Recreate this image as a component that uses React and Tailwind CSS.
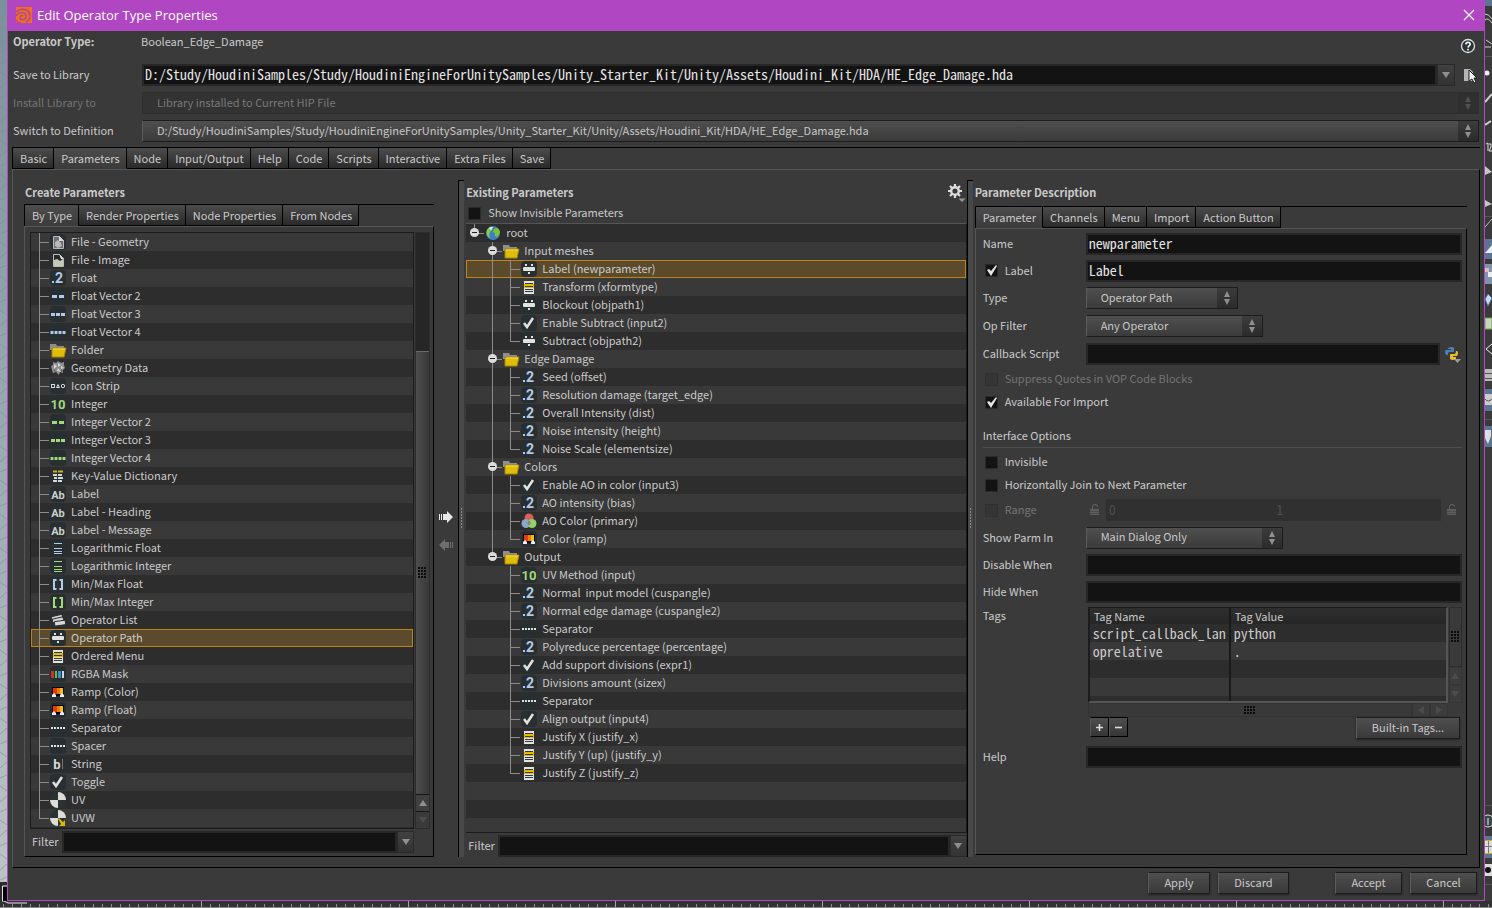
import React from "react";

const MONO = "font-['Noto_Sans_Mono_CJK_SC','Liberation_Mono',monospace]";

/* ---------- icons ---------- */

const BLUE = "#b4cbe8";
const GREEN = "#a3d977";

function Plate() {
  return <rect x="1" y="1" width="16" height="16" rx="4" fill="#282f32" stroke="none" />;
}

function Glyph({ children, fill, size = 13, x = 9 }) {
  return (
    <text x={x} y="14" textAnchor="middle" fill={fill} fontSize={size} className="font-['Roboto','Liberation_Sans',sans-serif] font-bold">
      {children}
    </text>
  );
}

function Bars({ xs, w, fill, y = 8, h = 3 }) {
  return xs.map((x) => <rect key={x} x={x} y={y} width={w} height={h} fill={fill} />);
}

const GEO = (
  <g>
    <path d="M2 7l2-1V3l3 1 2-2 3 2 3-1v3l1 3-2 2v3l-3-1-1 3-3-3-3 1-1-3z" fill="#8d8d8d" />
    <path d="M5 5l3 2-3 3zM9 4l3 2-3 2zM9 9l3 4-4-1zM12 7l3 2-3 1z" fill="#d6d6d6" />
    <path d="M5 10l3 3-3-1zM12 10l2 2-2 1z" fill="#5d5d5d" />
  </g>
);

const ICONS = {
  fileGeo: (
    <g>
      <Plate />
      <path d="M4.500 3.500h6l4 4v8h-10z" fill="#6f6f6f" stroke="#b9b9b9" />
      <path d="M10 3l5 5h-5z" fill="#d8d8d8" />
      <path d="M6 9l3-2 3 3 1 3-4 2-3-2z" fill="#b8b8b8" />
    </g>
  ),
  fileImg: (
    <g>
      <Plate />
      <path d="M4.500 3.500h6l4 4v8h-10z" fill="#262b2d" stroke="#b9bdb4" />
      <path d="M5 9l3-1 3 2 3-2v7H5z" fill="#c5cab8" />
      <path d="M10 3l5 5h-3z" fill="#e2e2e2" />
    </g>
  ),
  float: (
    <g>
      <Plate />
      <rect x="3" y="12" width="2" height="2" fill={BLUE} />
      <Glyph fill={BLUE} size={14} x={10}>2</Glyph>
    </g>
  ),
  fv2: (<g><Plate /><Bars xs={[3, 10]} w={5} fill={BLUE} /></g>),
  fv3: (<g><Plate /><Bars xs={[2, 7, 12]} w={4} fill={BLUE} /></g>),
  fv4: (<g><Plate /><rect x="1" y="8" width="16" height="3" fill="#66788c" /><Bars xs={[2, 6, 10, 14]} w={2} fill={BLUE} /></g>),
  folder: (
    <g>
      <path d="M1 3h6l1 2h7v4H1z" fill="#8f8f8f" />
      <path d="M3 7h14l-2 9H3z" fill="#e0bd08" stroke="#a58608" strokeWidth="1" />
      <path d="M4 8h12" stroke="#f5dd57" />
    </g>
  ),
  geo: GEO,
  strip: (
    <g fill="none" stroke="#d8d8d8">
      <Plate />
      <rect x="2.500" y="7.500" width="3" height="3" />
      <path d="M7.500 10.500l1.500-3 1.500 3z" />
      <circle cx="14" cy="9" r="1.700" />
    </g>
  ),
  int: (<g><Plate /><Glyph fill={GREEN} size={13}>10</Glyph></g>),
  iv2: (<g><Plate /><Bars xs={[3, 10]} w={5} fill={GREEN} /></g>),
  iv3: (<g><Plate /><Bars xs={[2, 7, 12]} w={4} fill={GREEN} /></g>),
  iv4: (<g><Plate /><rect x="1" y="8" width="16" height="3" fill="#5f7f4d" /><Bars xs={[2, 6, 10, 14]} w={2} fill={GREEN} /></g>),
  dict: (
    <g>
      <Plate />
      <path d="M4 4.500h4M9 4.500h5" stroke="#d3b10b" strokeWidth="2" />
      <path d="M4 8h4M9 8h4M5 11h3M9 11h5M4 14h4M9 14h4" stroke="#d9d9d9" strokeWidth="2" />
    </g>
  ),
  ab: (<g><Plate /><Glyph fill="#cfcfc8" size={11}>Ab</Glyph></g>),
  logf: (<g><Plate /><path d="M5 4.500h8M5 9.500h8M5 12.500h8M5 14.500h8" stroke={BLUE} /></g>),
  logi: (<g><Plate /><path d="M5 4.500h8M5 9.500h8M5 12.500h8M5 14.500h8" stroke={GREEN} /></g>),
  mmf: (<g><Plate /><path d="M7.500 5H5v9h2.500M10.500 5H13v9h-2.500" fill="none" stroke={BLUE} strokeWidth="2" /></g>),
  mmi: (<g><Plate /><path d="M7.500 5H5v9h2.500M10.500 5H13v9h-2.500" fill="none" stroke={GREEN} strokeWidth="2" /></g>),
  oplist: (
    <g stroke="#282f32" strokeWidth="1" fill="#d6d6d6">
      <rect x="2.500" y="4.500" width="11" height="4" rx="1" transform="rotate(-14 8 6)" />
      <rect x="3.500" y="7" width="11" height="4" rx="1" transform="rotate(-12 9 9)" />
      <rect x="5.500" y="10" width="11" height="4.500" rx="1" transform="rotate(-8 10 12)" />
    </g>
  ),
  oppath: (
    <g fill="#e2e2de">
      <Plate />
      <rect x="3" y="7" width="12" height="4" rx="1" />
      <rect x="5" y="4" width="2" height="2" />
      <rect x="11" y="4" width="2" height="2" />
      <rect x="8" y="12" width="2" height="2" />
    </g>
  ),
  menu: (
    <g>
      <rect x="4" y="3" width="10" height="13" fill="#e2e2de" />
      <rect x="4" y="6" width="10" height="4" fill="#e0bd08" />
      <path d="M5 5.500h8M5 8.500h8M5 11.500h8M5 13.500h8" stroke="#34383a" />
    </g>
  ),
  rgba: (
    <g>
      <Plate />
      <rect x="2" y="6" width="3" height="7" fill="#d22f2f" />
      <rect x="6" y="6" width="2" height="7" fill="#5ec83a" />
      <rect x="9" y="6" width="3" height="7" fill="#3b8be6" />
      <rect x="13" y="6" width="2" height="7" fill="#d6d6d6" />
    </g>
  ),
  ramp: (
    <g>
      <Plate />
      <rect x="3" y="4" width="12" height="9" fill="#060606" />
      <rect x="4" y="5" width="4" height="6" fill="#e8380d" />
      <rect x="8" y="5" width="3" height="6" fill="#ef7a0c" />
      <rect x="11" y="5" width="3" height="6" fill="#f2bf10" />
      <path d="M3 14v-2l2-2 2 2v2zM11 14v-2l2-2 2 2v2z" fill="#ececec" />
    </g>
  ),
  sep: (<g><Plate /><Bars xs={[2, 5, 8, 11, 14]} w={2} h={2} fill="#e2e2de" /></g>),
  string: (<g><Plate /><Glyph fill="#dcdcd6" size={13} x={8}>b</Glyph><path d="M13.500 4v10" stroke="#777" /></g>),
  toggle: (<g><Plate /><path d="M4 9l3 4 6-9" fill="none" stroke="#e2e2de" strokeWidth="2.500" /></g>),
  uv: (
    <g>
      <circle cx="9" cy="9" r="8" fill="#2b3235" />
      <path d="M9 9V1a8 8 0 0 1 8 8z" fill="#dcdcd8" />
      <path d="M9 9v8a8 8 0 0 1-8-8z" fill="#dcdcd8" />
    </g>
  ),
  uvw: (
    <g>
      <circle cx="9" cy="9" r="8" fill="#2b3235" />
      <path d="M9 9V1a8 8 0 0 1 8 8z" fill="#dcdcd8" />
      <path d="M9 9v8a8 8 0 0 1-8-8z" fill="#dcdcd8" />
      <path d="M9 10l1-1 4 4 2-2v6h-6l2-2z" fill="#d9b708" />
    </g>
  ),
  color: (
    <g>
      <circle cx="9" cy="6" r="4.500" fill="#d8605c" />
      <circle cx="6" cy="11.500" r="4.500" fill="#8aa6c9" />
      <circle cx="12" cy="11.500" r="4.500" fill="#93cf6c" />
      <path d="M9 8l2 3-2 3-2-3z" fill="#8f8672" />
    </g>
  ),
  globe: (
    <g>
      <circle cx="9" cy="9" r="7" fill="#3f7fc4" />
      <path d="M3 6c2-3 4-4 6-3l-1 3-2 2-1 3 1 3C3 13 2 9 3 6z" fill="#8ccf3e" />
      <path d="M10 5l3-1c2 1 3 3 3 5l-3 4-2-1V9L9 8z" fill="#7cc531" />
      <path d="M5 4c1-1 3-1 4-1L7 6z" fill="#dfefff" />
    </g>
  ),
};

function Icon({ name }) {
  return (
    <svg width="18" height="18" viewBox="0 0 18 18" className="shrink-0" aria-hidden="true">
      {ICONS[name]}
    </svg>
  );
}

/* Guide cells: "|" line, "+" branch, "L" last branch, "o" toggle, "r" root toggle, "O" last toggle */
function Guide({ kind }) {
  const line = "#8c8c8c";
  return (
    <svg width="18" height="18" viewBox="0 0 18 18" className="shrink-0" aria-hidden="true">
      {(kind === "|" || kind === "+" || kind === "o") && <path d="M8.500 0v18" stroke={line} />}
      {(kind === "L" || kind === "O" || kind === "r") && <path d="M8.500 0v9" stroke={line} />}
      {(kind === "+" || kind === "L") && <path d="M8 9.500h10" stroke={line} />}
      {(kind === "o" || kind === "O" || kind === "r") && (
        <g>
          <path d="M12 9.500h6" stroke={line} />
          <circle cx="8.500" cy="8.500" r="4.500" fill="#dcdcdc" />
          <path d="M6 8.500h5" stroke="#222" />
        </g>
      )}
    </svg>
  );
}

function Triangle({ dir = "down", fill = "#8f8f8f" }) {
  const d = { down: "M0 1h8l-4 6z", up: "M0 7h8l-4-6z", left: "M7 0v8l-6-4z", right: "M1 0v8l6-4z" }[dir];
  return (
    <svg width="8" height="8" viewBox="0 0 8 8" aria-hidden="true">
      <path d={d} fill={fill} />
    </svg>
  );
}

function Grip({ cols, rows }) {
  const dots = [];
  for (let r = 0; r < rows; r++) for (let c = 0; c < cols; c++) dots.push([c * 3, r * 3]);
  return (
    <svg width={cols * 3} height={rows * 3} aria-hidden="true">
      {dots.map(([x, y]) => (
        <rect key={x + "-" + y} x={x} y={y} width="2" height="2" fill="#0c0c0c" />
      ))}
    </svg>
  );
}

/* ---------- controls ---------- */

function Tabs({ items, active, label }) {
  return (
    <div role="tablist" aria-label={label} className="flex h-[22px] border-t border-l border-black">
      {items.map((t, i) => (
        <button
          key={t}
          role="tab"
          aria-selected={i === active}
          className={
            "flex items-center border-r border-b border-black pr-[6px] pl-[7px] whitespace-nowrap " +
            (i === active
              ? "border-b-[#3b3b3b] bg-linear-to-b from-[#4d4d4d] to-[#3b3b3b]"
              : "bg-linear-to-b from-[#4c4c4c] to-[#2a2a2a]")
          }
        >
          {t}
        </button>
      ))}
    </div>
  );
}

function Field({ id, label, value = "", className = "", disabled = false }) {
  return (
    <input
      id={id}
      aria-label={label}
      defaultValue={value}
      disabled={disabled}
      className={
        MONO + " h-[22px] min-w-0 border-2 px-px pb-[2px] text-[14px] leading-4 outline-none " +
        (disabled ? "border-[#303030] bg-[#303030] text-[#4e4e4e] " : "border-[#272727] bg-[#131313] text-[#e4e4e4] ") +
        className
      }
    />
  );
}

function Select({ id, value, className = "", disabled = false }) {
  return (
    <div className={"grid " + className}>
      <select
        id={id}
        disabled={disabled}
        className={
          "[grid-area:1/1] h-[22px] w-full appearance-none border pr-6 pb-[3px] pl-[14px] outline-none " +
          (disabled
            ? "border-[#2e2e2e] bg-[#333333] text-[#787878]"
            : "border-[#1c1c1c] border-l-[#5c5c5c] bg-linear-to-b from-[#4f4f4f] to-[#3b3b3b] text-[#c8c8c8]")
        }
      >
        <option>{value}</option>
      </select>
      <span
        className={
          "pointer-events-none [grid-area:1/1] my-px mr-px flex w-[20px] flex-col items-center justify-center justify-self-end " +
          (disabled ? "bg-[#2f2f2f]" : "bg-linear-to-b from-[#3c3c3c] to-[#2b2b2b]")
        }
      >
        <svg width="8" height="14" viewBox="0 0 8 14" aria-hidden="true">
          <path d="M1 6h6l-3-6zM1 8h6l-3 6z" fill={disabled ? "#505050" : "#8f8f8f"} />
        </svg>
      </span>
    </div>
  );
}

function Check({ id, label, checked = false, disabled = false }) {
  return (
    <div className="flex items-center gap-[7px]">
      <span className="grid size-[13px] place-items-center">
        <input
          id={id}
          type="checkbox"
          defaultChecked={checked}
          disabled={disabled}
          className={
            "peer [grid-area:1/1] size-[13px] appearance-none border " +
            (disabled ? "border-[#303030] bg-[#353535]" : "border-[#2a2a2a] bg-[#131313]")
          }
        />
        <svg width="13" height="13" viewBox="0 0 13 13" className="pointer-events-none invisible [grid-area:1/1] peer-checked:visible" aria-hidden="true">
          <path d="M2 6l2-1 2 2 5-6 1 1-6 10z" fill="#e6e6e6" />
        </svg>
      </span>
      <label htmlFor={id} className={"pb-[2px] " + (disabled ? "text-[#747474]" : "")}>{label}</label>
    </div>
  );
}

function PushButton({ children, className = "" }) {
  return (
    <button className={"h-[22px] border border-[#1c1c1c] border-l-[#5c5c5c] bg-linear-to-b from-[#4f4f4f] to-[#3a3a3a] pb-[2px] shadow-[0_1px_2px_rgba(0,0,0,0.4)] " + className}>
      {children}
    </button>
  );
}

function FilterRow({ id, className = "" }) {
  return (
    <div className={"flex items-center " + className}>
      <label htmlFor={id} className="w-[30px] shrink-0 pb-[2px]">Filter</label>
      <Field id={id} className="flex-1" />
      <button aria-label="Filter history" className="grid h-[22px] w-[17px] place-items-center border border-[#2a2a2a] bg-linear-to-b from-[#404040] to-[#333333]">
        <Triangle />
      </button>
    </div>
  );
}

function TreeRow({ guides, icon, text, selected }) {
  return (
    <li
      className={
        "flex h-[18px] items-center whitespace-pre " +
        (selected ? "bg-[#5b4b2c] ring-1 ring-inset ring-[#b9851c]" : "")
      }
    >
      {guides.split("").map((g, i) => <Guide key={i} kind={g} />)}
      <Icon name={icon} />
      <span className="pb-[2px] pl-1">{text}</span>
    </li>
  );
}

/* ---------- data ---------- */

const TYPES = [
  ["fileGeo", "File - Geometry"], ["fileImg", "File - Image"], ["float", "Float"], ["fv2", "Float Vector 2"],
  ["fv3", "Float Vector 3"], ["fv4", "Float Vector 4"], ["folder", "Folder"], ["geo", "Geometry Data"],
  ["strip", "Icon Strip"], ["int", "Integer"], ["iv2", "Integer Vector 2"], ["iv3", "Integer Vector 3"],
  ["iv4", "Integer Vector 4"], ["dict", "Key-Value Dictionary"], ["ab", "Label"], ["ab", "Label - Heading"],
  ["ab", "Label - Message"], ["logf", "Logarithmic Float"], ["logi", "Logarithmic Integer"], ["mmf", "Min/Max Float"],
  ["mmi", "Min/Max Integer"], ["oplist", "Operator List"], ["oppath", "Operator Path"], ["menu", "Ordered Menu"],
  ["rgba", "RGBA Mask"], ["ramp", "Ramp (Color)"], ["ramp", "Ramp (Float)"], ["sep", "Separator"],
  ["sep", "Spacer"], ["string", "String"], ["toggle", "Toggle"], ["uv", "UV"], ["uvw", "UVW"],
];

const TREE = [
  ["r", "globe", "root"],
  [" o", "folder", "Input meshes"],
  [" |+", "oppath", "Label (newparameter)"],
  [" |+", "menu", "Transform (xformtype)"],
  [" |+", "oppath", "Blockout (objpath1)"],
  [" |+", "toggle", "Enable Subtract (input2)"],
  [" |L", "oppath", "Subtract (objpath2)"],
  [" o", "folder", "Edge Damage"],
  [" |+", "float", "Seed (offset)"],
  [" |+", "float", "Resolution damage (target_edge)"],
  [" |+", "float", "Overall Intensity (dist)"],
  [" |+", "float", "Noise intensity (height)"],
  [" |L", "float", "Noise Scale (elementsize)"],
  [" o", "folder", "Colors"],
  [" |+", "toggle", "Enable AO in color (input3)"],
  [" |+", "float", "AO intensity (bias)"],
  [" |+", "color", "AO Color (primary)"],
  [" |L", "ramp", "Color (ramp)"],
  [" O", "folder", "Output"],
  ["  +", "int", "UV Method (input)"],
  ["  +", "float", "Normal  input model (cuspangle)"],
  ["  +", "float", "Normal edge damage (cuspangle2)"],
  ["  +", "sep", "Separator"],
  ["  +", "float", "Polyreduce percentage (percentage)"],
  ["  +", "toggle", "Add support divisions (expr1)"],
  ["  +", "float", "Divisions amount (sizex)"],
  ["  +", "sep", "Separator"],
  ["  +", "toggle", "Align output (input4)"],
  ["  +", "menu", "Justify X (justify_x)"],
  ["  +", "menu", "Justify Y (up) (justify_y)"],
  ["  L", "menu", "Justify Z (justify_z)"],
];

const LIBRARY = "D:/Study/HoudiniSamples/Study/HoudiniEngineForUnitySamples/Unity_Starter_Kit/Unity/Assets/Houdini_Kit/HDA/HE_Edge_Damage.hda";

/* ---------- page parts ---------- */

function ViewportEdge() {
  return (
    <svg className="w-[7px] shrink-0 self-stretch bg-linear-to-b from-[#7b919b] to-[#bcc5c6]" aria-hidden="true">
      <defs>
        <pattern id="grid-lines" width="7" height="34" patternUnits="userSpaceOnUse">
          <path d="M0 4l7 5M0 20l7-6M0 30l7-3" stroke="#7c8b92" strokeOpacity="0.600" fill="none" />
        </pattern>
      </defs>
      <rect width="7" height="882" fill="url(#grid-lines)" />
      <rect y="882" width="7" height="30" fill="#2b2b2b" />
      <path d="M2.500 901v-15h5" stroke="#e6e6e6" fill="none" />
      <rect x="3" y="887" width="4" height="14" fill="#000" />
    </svg>
  );
}

function ToolbarEdge() {
  return (
    <svg className="w-[7px] shrink-0 self-stretch bg-[#3a3a3a]" aria-hidden="true">
      <rect width="7" height="6" fill="#5b7591" />
      <path d="M0 14q4 0 7 5M0 20q3-3 7 3M1 40l6 4M0 47h6" stroke="#d0d0d0" fill="none" />
      <path d="M0 56.500h7M0 216.500h7M0 419.500h7M0 805.500h7M0 884.500h7" stroke="#565656" />
      <circle cx="2" cy="73" r="2.500" fill="#eee" />
      <path d="M0 102l7-8M0 125l6-4" stroke="#cfcfcf" strokeWidth="2" />
      <path d="M1 144l2-1v8M4 144h2v3l-2 4h3" stroke="#ddd" fill="none" />
      <path d="M0 166l7 6-7 3zM0 200l7 4-7 3zM0 180l7-6" fill="#c4c4c4" />
      <path d="M0 227l7-8" stroke="#bbb" />
      <rect y="239" width="7" height="20" fill="#5b7591" />
      <path d="M0 253l7-8v8z" fill="#e6eef6" />
      <rect y="264" width="7" height="20" fill="#7d94ac" />
      <rect y="268" width="4" height="4" fill="#e8b8b8" />
      <rect x="3" y="272" width="4" height="5" fill="#eee" />
      <path d="M0 299l3-5 4 4-4 8z" fill="#c9dcee" stroke="#4b79aa" />
      <path d="M0 318h7v11H0z" fill="#c9d8bd" stroke="#6fa34c" />
      <path d="M1 349l6-5M1 349l6 5" stroke="#eee" />
      <rect y="369" width="7" height="12" fill="#b9b9b9" />
      <path d="M0 373.500h7M0 378.500h7" stroke="#555" />
      <rect y="389" width="7" height="22" fill="#5b7591" />
      <path d="M0 394h7v11H0z" fill="#ccc" />
      <path d="M0 399q3 4 7 0" stroke="#555" fill="none" />
      <rect y="426" width="7" height="21" fill="#5b7591" />
      <path d="M0 430h6v6l-3 8-3-6z" fill="#ddd" />
      <circle cx="3" cy="821" r="6" fill="#39474b" stroke="#ddd" />
      <path d="M3 818v7" stroke="#eee" />
      <rect y="836" width="7" height="22" fill="#5b7591" />
      <rect y="841" width="7" height="12" fill="#ddd" />
      <path d="M0 840.500h7M0 853.500h7" stroke="#d3b10b" />
      <path d="M0 846.500h7M3.500 841v12" stroke="#777" />
      <rect y="864" width="7" height="12" fill="#ddd" />
      <circle cx="3" cy="870" r="3" fill="#111" />
    </svg>
  );
}

function TimelineEdge() {
  return (
    <svg className="h-[7px] w-full shrink-0 bg-[#333333]" aria-hidden="true">
      <defs>
        <pattern id="ticks" x="3" width="9" height="7" patternUnits="userSpaceOnUse">
          <rect y="3" width="1" height="4" fill="#8f8f8f" />
        </pattern>
        <pattern id="major-ticks" x="201" width="207" height="7" patternUnits="userSpaceOnUse">
          <rect width="1" height="7" fill="#a8a8a8" />
        </pattern>
      </defs>
      <rect width="100%" height="7" fill="url(#ticks)" />
      <rect width="100%" height="7" fill="url(#major-ticks)" />
      <rect y="6" width="100%" height="1" fill="#8b8b8b" />
      <path d="M2 0h2l4 2h19" stroke="#e6e6e6" fill="none" />
    </svg>
  );
}

function Splitter() {
  return (
    <div className="mr-[2px] flex items-center justify-center border-t border-l border-black bg-[#484848]">
      <svg width="3" height="22" viewBox="0 0 3 22" aria-hidden="true">
        {[0, 3, 6, 9, 12, 15, 18].map((y) => (
          <rect key={y} x="1" y={y} width="1" height="2" fill="#8a8a8a" />
        ))}
      </svg>
    </div>
  );
}

const STRIPES_LIGHT = "bg-[repeating-linear-gradient(to_bottom,#393939_0_18px,#2d2d2d_18px_36px)]";
const STRIPES_DARK = "bg-[repeating-linear-gradient(to_bottom,#2d2d2d_0_18px,#393939_18px_36px)]";
const FRAME = "border border-t-[#555555] border-l-[#555555] border-r-black border-b-black";

function CreatePanel() {
  return (
    <section className="flex min-w-0 flex-col">
      <h2 className="h-6 pl-px font-bold leading-6">Create Parameters</h2>
      <Tabs label="Create Parameters" items={["By Type", "Render Properties", "Node Properties", "From Nodes"]} active={0} />
      <div className={"flex flex-1 flex-col pt-[5px] pr-[3px] pb-[3px] pl-[5px] " + FRAME}>
        <div className="flex flex-1">
          <ul className={"flex-1 overflow-hidden border border-[#1c1c1c] " + STRIPES_LIGHT}>
            {TYPES.map(([icon, text], i) => (
              <TreeRow key={text} guides={i === TYPES.length - 1 ? "L" : "+"} icon={icon} text={text} selected={text === "Operator Path"} />
            ))}
          </ul>
          <div className="ml-px flex w-[15px] flex-col border border-[#2c2c2c] bg-[#262626] pt-[118px]">
            <div className="grid flex-1 place-items-center border-t border-[#6a6a6a] bg-linear-to-r from-[#4e4e4e] to-[#383838]">
              <Grip cols={3} rows={4} />
            </div>
            <button aria-label="Scroll up" className="grid h-[18px] place-items-center border-y border-[#151515] bg-[#404040]"><Triangle dir="up" /></button>
            <button aria-label="Scroll down" className="grid h-[16px] place-items-center bg-[#3a3a3a]"><Triangle fill="#4c4c4c" /></button>
          </div>
        </div>
        <FilterRow id="type-filter" className="mt-[2px] mr-[16px] pl-[2px]" />
      </div>
    </section>
  );
}

function MoveButtons() {
  return (
    <div className="flex flex-col items-center justify-center gap-[14px] pt-6">
      <button aria-label="Add parameter">
        <svg width="14" height="14" viewBox="0 0 14 14" className="block"><path d="M0 4h1v6H0zM2 4h1v6H2zM4 4h4V1l6 6-6 6v-3H4z" fill="#e8e8e8" /></svg>
      </button>
      <button aria-label="Remove parameter">
        <svg width="14" height="14" viewBox="0 0 14 14" className="block"><path d="M14 4h-1v6h1zM12 4h-1v6h1zM10 4H6V1L0 7l6 6v-3h4z" fill="#6e6e6e" /></svg>
      </button>
    </div>
  );
}

function ExistingPanel() {
  return (
    <section className="flex min-w-0 flex-col">
      <div className="flex h-6 items-center justify-between">
        <h2 className="font-bold">Existing Parameters</h2>
        <button aria-label="Options" className="pr-px">
          <svg width="20" height="20" viewBox="0 0 20 20" className="block">
            <g stroke="#dedede">
              <circle cx="9" cy="9" r="3.800" fill="none" strokeWidth="2.400" />
              <path d="M9 2v3M9 13v3M2 9h3M13 9h3M4 4l2 2M12 12l2 2M14 4l-2 2M6 12l-2 2" strokeWidth="2.200" />
            </g>
            <path d="M12.500 16.500h7l-3.500 3.500z" fill="#999" />
          </svg>
        </button>
      </div>
      <div className="h-[19px] pl-[2px]">
        <Check id="show-invisible" label="Show Invisible Parameters" />
      </div>
      <ul className={"flex-1 overflow-hidden border-t border-r border-b border-t-[#555555] border-r-[#1c1c1c] border-b-[#1c1c1c] " + STRIPES_DARK}>
        {TREE.map(([g, icon, text], i) => (
          <TreeRow key={i} guides={g} icon={icon} text={text} selected={i === 2} />
        ))}
      </ul>
      <FilterRow id="existing-filter" className="mt-[2px] pl-[2px]" />
    </section>
  );
}

function FormRow({ id, label, children, className = "h-7" }) {
  return (
    <div className={"flex items-center " + className}>
      <label htmlFor={id} className="w-[103px] shrink-0 pb-[2px]">{label}</label>
      {children}
    </div>
  );
}

function Lock() {
  return (
    <svg width="12" height="14" viewBox="0 0 12 14" className="shrink-0" aria-hidden="true">
      <path d="M3.500 6V3.500q0-2 2.500-2t2.500 2V4" fill="none" stroke="#666" />
      <rect x="1" y="6" width="9" height="6" fill="#5c5f61" />
      <path d="M1 8.500h9M1 10.500h9" stroke="#4a4d4f" />
    </svg>
  );
}

function TagsEditor() {
  const arrow = "grid place-items-center border border-[#353535] bg-[#3c3c3c]";
  return (
    <div className="flex min-w-0 flex-1 flex-col pl-[2px]">
      <div className="flex">
        <div className="h-24 min-w-0 flex-1 overflow-hidden border-2 border-t border-[#1c1c1c] border-r-[#555555] border-b-[#555555]">
          <table className="w-full table-fixed border-collapse">
            <thead>
              <tr className="h-4 bg-linear-to-b from-[#2f2f2f] to-[#262626]">
                <th className="w-[140px] border-r-2 border-[#1a1a1a] p-0 pl-1 text-left font-normal leading-4">Tag Name</th>
                <th className="p-0 pl-1 text-left font-normal leading-4">Tag Value</th>
              </tr>
            </thead>
            <tbody className={MONO + " text-[14px]"}>
              {[["script_callback_lan", "python"], ["oprelative", "."], ["", ""], ["", ""], ["", ""]].map(([k, v], i) => (
                <tr key={i} className={"h-[18px] " + (i % 2 ? "bg-[#393939]" : "bg-[#2d2d2d]")}>
                  <td className="border-r-2 border-[#1a1a1a] p-0 pl-[3px] leading-[18px] whitespace-nowrap">{k}</td>
                  <td className="p-0 pl-[3px] leading-[18px]">{v}</td>
                </tr>
              ))}
            </tbody>
          </table>
        </div>
        <div className="ml-px flex w-[13px] flex-col">
          <div className="grid flex-1 place-items-center border border-[#2c2c2c] bg-[#3a3a3a]"><Grip cols={3} rows={4} /></div>
          <button aria-label="Scroll up" className={arrow + " h-[18px]"}><Triangle dir="up" fill="#4c4c4c" /></button>
          <button aria-label="Scroll down" className={arrow + " h-[18px]"}><Triangle fill="#4c4c4c" /></button>
        </div>
      </div>
      <div className="mr-[14px] flex h-[14px]">
        <div className="grid flex-1 place-items-center border border-[#343434] bg-[#393939]"><Grip cols={4} rows={3} /></div>
        <button aria-label="Scroll left" className={arrow + " w-[18px]"}><Triangle dir="left" fill="#4c4c4c" /></button>
        <button aria-label="Scroll right" className={arrow + " w-[18px]"}><Triangle dir="right" fill="#4c4c4c" /></button>
      </div>
      <div className="flex pr-[2px] pl-[2px]">
        <button aria-label="Add tag" className="grid h-5 w-[19px] place-items-center border border-black border-l-[#555555] bg-linear-to-b from-[#4f4f4f] to-[#363636]">
          <svg width="9" height="9" viewBox="0 0 9 9"><path d="M4.500 1v7M1 4.500h7" stroke="#dcdcdc" strokeWidth="1.600" /></svg>
        </button>
        <button aria-label="Remove tag" className="grid h-5 w-[19px] place-items-center border border-black border-l-[#555555] bg-linear-to-b from-[#4f4f4f] to-[#363636]">
          <svg width="9" height="9" viewBox="0 0 9 9"><path d="M1 4.500h7" stroke="#dcdcdc" strokeWidth="1.600" /></svg>
        </button>
        <PushButton className="ml-auto w-[104px]">Built-in Tags...</PushButton>
      </div>
    </div>
  );
}

function DescriptionPanel() {
  return (
    <section className="flex min-w-0 flex-col pb-[2px]">
      <h2 className="h-6 font-bold leading-6">Parameter Description</h2>
      <div className="mt-[2px]">
        <Tabs label="Parameter Description" items={["Parameter", "Channels", "Menu", "Import", "Action Button"]} active={0} />
      </div>
      <div className={"flex-1 pt-px pr-1 pl-[7px] " + FRAME}>
        <FormRow id="name" label="Name" className="h-[27px]"><Field id="name" value="newparameter" className="flex-1" /></FormRow>
        <div className="flex h-[27px] items-center">
          <div className="w-[103px] shrink-0 pl-[2px]"><Check id="use-label" label="Label" checked /></div>
          <Field id="label-text" label="Label text" value="Label" className="flex-1" />
        </div>
        <FormRow id="type" label="Type"><Select id="type" value="Operator Path" className="w-[152px]" /></FormRow>
        <FormRow id="op-filter" label="Op Filter"><Select id="op-filter" value="Any Operator" className="w-[177px]" /></FormRow>
        <FormRow id="callback" label="Callback Script">
          <Field id="callback" className="flex-1" />
          <button aria-label="Script language" className="ml-1 mr-px">
            <svg width="17" height="17" viewBox="0 0 17 17" className="block">
              <path d="M4 2q4-2 6 0v4H5q-1 0-1 3H2Q0 5 2 4h5V3H4z" fill="#4b7fb8" />
              <path d="M12 5h1q2 2 0 5H9v1h3v2q-3 2-6 0V9q0-1 1-1h4q1-1 1-3z" fill="#e8bd2e" />
              <path d="M10 13h7l-3.500 4z" fill="#9a9a9a" />
            </svg>
          </button>
        </FormRow>
        <div className="flex h-[22px] items-center pl-[2px]"><Check id="suppress" label="Suppress Quotes in VOP Code Blocks" disabled /></div>
        <div className="flex h-6 items-center pl-[2px]"><Check id="importable" label="Available For Import" checked /></div>
        <h3 className="mt-[10px] mb-[2px] h-6 border-b border-[#4e4e4e] leading-[22px]">Interface Options</h3>
        <div className="flex h-6 items-center pl-[2px]"><Check id="invisible" label="Invisible" /></div>
        <div className="flex h-[22px] items-center pl-[2px]"><Check id="join" label="Horizontally Join to Next Parameter" /></div>
        <div className="flex h-7 items-center pl-[2px]">
          <div className="w-[104px] shrink-0"><Check id="range" label="Range" disabled /></div>
          <Lock />
          <Field label="Range minimum" value="0" disabled className="ml-[5px] flex-1" />
          <Field label="Range maximum" value="1" disabled className="mr-[5px] flex-1" />
          <Lock />
          <span className="w-1" />
        </div>
        <FormRow id="show-in" label="Show Parm In" className="h-[27px]"><Select id="show-in" value="Main Dialog Only" className="w-[197px]" /></FormRow>
        <FormRow id="disable-when" label="Disable When" className="h-[27px]"><Field id="disable-when" className="flex-1" /></FormRow>
        <FormRow id="hide-when" label="Hide When" className="h-[27px]"><Field id="hide-when" className="flex-1" /></FormRow>
        <div className="flex pt-[2px] pb-1">
          <h3 className="w-[103px] shrink-0 leading-4">Tags</h3>
          <TagsEditor />
        </div>
        <FormRow id="help" label="Help" className="h-[27px]"><Field id="help" className="flex-1" /></FormRow>
      </div>
    </section>
  );
}

export default function App() {
  return (
    <div className="flex min-h-screen flex-col bg-[#333333] font-['Noto_Sans_CJK_SC','Liberation_Sans',sans-serif] text-[11px] leading-4 text-[#cacaca]">
      <div className="flex flex-1">
        <ViewportEdge />
        <main className="flex min-w-0 flex-1 flex-col border border-t-0 border-[#b04ac4] bg-[#3a3a3a]">
          <header className="flex h-[31px] items-center bg-[#b046c2] pr-[9px] pb-px pl-2">
            <svg width="16" height="16" viewBox="0 0 16 16" aria-hidden="true">
              <rect width="16" height="16" fill="#f36c21" />
              <path d="M0 5C5 0 14 2 14 9c0 3-2 5-4 6M0 9c2-4 9-5 10 0 0 4-5 5-6 2 0-2 2-3 3-2M0 13c1 2 3 3 5 3" fill="none" stroke="#a84a9c" strokeWidth="1.500" />
            </svg>
            <h1 className="flex-1 pl-[5px] font-['Open_Sans','Noto_Sans',sans-serif] text-[13px] text-white">Edit Operator Type Properties</h1>
            <button aria-label="Close">
              <svg width="12" height="12" viewBox="0 0 12 12" className="block"><path d="M1 1l10 10M11 1L1 11" stroke="#fff" strokeWidth="1.200" /></svg>
            </button>
          </header>

          <div className="px-[5px]">
            <div className="flex h-[30px]">
              <span className="w-32 pt-[2px] font-bold">Operator Type:</span>
              <span className="flex-1 pt-[2px]">Boolean_Edge_Damage</span>
              <button aria-label="Help" className="mr-[3px]">
                <svg width="16" height="16" viewBox="0 0 16 16" className="block">
                  <circle cx="8" cy="8" r="6.500" fill="#2a3236" stroke="#e0e0e0" strokeWidth="1.300" />
                  <path d="M5.800 6.300q.2-2 2.200-2t2.200 1.800q0 1-1 1.600T8 9.500M8 10.800v1.600" fill="none" stroke="#f0f0f0" strokeWidth="1.700" />
                </svg>
              </button>
            </div>
            <div className="flex h-7 items-center">
              <label htmlFor="save-to" className="w-[129px] shrink-0 pb-[2px]">Save to Library</label>
              <Field id="save-to" value={LIBRARY} className="flex-1" />
              <button aria-label="Recent libraries" className="grid h-[22px] w-[18px] place-items-center border border-[#2a2a2a] bg-linear-to-b from-[#404040] to-[#333333]"><Triangle /></button>
              <button aria-label="Choose file" className="ml-[6px]">
                <svg width="18" height="18" viewBox="0 0 18 18" className="block">
                  <path d="M3 3h6l3 3v9H3z" fill="#b4b4b4" />
                  <path d="M8 4l8 8h-3l2 4-2 1-2-4-3 2z" fill="#f0f0f0" stroke="#1c1c1c" />
                </svg>
              </button>
            </div>
            <div className="flex h-7 items-center text-[#747474]">
              <label htmlFor="install-to" className="w-[129px] shrink-0 pb-[2px]">Install Library to</label>
              <Select id="install-to" value="Library installed to Current HIP File" className="flex-1" disabled />
            </div>
            <div className="flex h-7 items-center">
              <label htmlFor="switch-to" className="w-[129px] shrink-0 pb-[2px]">Switch to Definition</label>
              <Select id="switch-to" value={LIBRARY} className="flex-1" />
            </div>
          </div>

          <div className="mt-[2px] flex flex-1 flex-col px-1">
            <Tabs
              label="Operator type"
              items={["Basic", "Parameters", "Node", "Input/Output", "Help", "Code", "Scripts", "Interactive", "Extra Files", "Save"]}
              active={1}
            />
            <div className={"grid flex-1 grid-cols-[410fr_24px_8px_500fr_8px_492fr] py-[10px] pr-3 pl-[11px] " + FRAME}>
              <CreatePanel />
              <MoveButtons />
              <Splitter />
              <ExistingPanel />
              <Splitter />
              <DescriptionPanel />
            </div>
          </div>

          <footer className="flex h-[32px] items-center justify-end gap-2 pr-[7px] pb-[2px]">
            <PushButton className="w-[62px]">Apply</PushButton>
            <PushButton className="mr-[38px] w-[71px]">Discard</PushButton>
            <PushButton className="w-[67px]">Accept</PushButton>
            <PushButton className="w-[67px]">Cancel</PushButton>
          </footer>
        </main>
        <ToolbarEdge />
      </div>
      <TimelineEdge />
    </div>
  );
}
